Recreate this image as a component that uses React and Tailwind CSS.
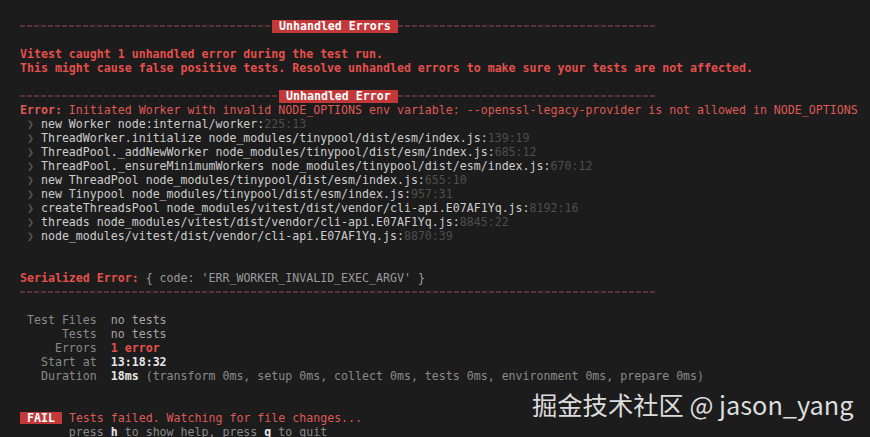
const dash =
  'inline-block h-[2px] align-middle bg-[repeating-linear-gradient(90deg,#5a3134_0_5px,transparent_5px_7px)]';

function Header({ label, left, right }) {
  return (
    <div className="flex items-center h-[14px]">
      <span className={`${dash} ${left}`} />
      <span className="inline-block bg-[#c4383a] text-white font-bold px-[7px] leading-[13px]">{label}</span>
      <span className={`${dash} ${right}`} />
    </div>
  );
}

const stack = [
  ['new Worker node:internal/worker:', '225:13'],
  ['ThreadWorker.initialize node_modules/tinypool/dist/esm/index.js:', '139:19'],
  ['ThreadPool._addNewWorker node_modules/tinypool/dist/esm/index.js:', '685:12'],
  ['ThreadPool._ensureMinimumWorkers node_modules/tinypool/dist/esm/index.js:', '670:12'],
  ['new ThreadPool node_modules/tinypool/dist/esm/index.js:', '655:10'],
  ['new Tinypool node_modules/tinypool/dist/esm/index.js:', '957:31'],
  ['createThreadsPool node_modules/vitest/dist/vendor/cli-api.E07AF1Yq.js:', '8192:16'],
  ['threads node_modules/vitest/dist/vendor/cli-api.E07AF1Yq.js:', '8845:22'],
  ['node_modules/vitest/dist/vendor/cli-api.E07AF1Yq.js:', '8870:39'],
];

const Blank = () => <div className="h-[14px]" />;

export default function App() {
  return (
    <div className="relative w-[870px] h-[437px] overflow-hidden bg-[#1c1c1c] font-['DejaVu_Sans_Mono',monospace] text-[11.6px] leading-[14px] whitespace-pre">
      <div className="pl-[20px] pt-[19px]">
        <Header label="Unhandled Errors" left="w-[252px]" right="w-[257px]" />
        <Blank />
        <div className="text-[#e4504c] font-bold">Vitest caught 1 unhandled error during the test run.</div>
        <div className="text-[#e4504c] font-bold">
          This might cause false positive tests. Resolve unhandled errors to make sure your tests are not affected.
        </div>
        <Blank />
        <Header label="Unhandled Error" left="w-[259px]" right="w-[257px]" />
        <div className="text-[#de5a55]">
          <span className="font-bold">Error:</span> Initiated Worker with invalid NODE_OPTIONS env variable: --openssl-legacy-provider is not allowed in NODE_OPTIONS
        </div>
        {stack.map(([text, pos]) => (
          <div key={text} className="text-[#cdcdcd]">
            <span className="text-[#555]"> ❯ </span>
            {text}
            <span className="text-[#4e4e4e]">{pos}</span>
          </div>
        ))}
        <Blank />
        <Blank />
        <div className="text-[#9a9a9a]">
          <span className="text-[#e4504c] font-bold">Serialized Error:</span> {"{ code: 'ERR_WORKER_INVALID_EXEC_ARGV' }"}
        </div>
        <div className="flex items-center h-[14px]">
          <span className={`${dash} w-[635px]`} />
        </div>
        <Blank />
        <div>
          <span className="text-[#8a8a8a]"> Test Files  </span>
          <span className="text-[#a5a5a5]">no tests</span>
        </div>
        <div>
          <span className="text-[#8a8a8a]">      Tests  </span>
          <span className="text-[#a5a5a5]">no tests</span>
        </div>
        <div>
          <span className="text-[#8a8a8a]">     Errors  </span>
          <span className="text-[#e4504c] font-bold">1 error</span>
        </div>
        <div>
          <span className="text-[#8a8a8a]">   Start at  </span>
          <span className="text-[#e6e6e6] font-bold">13:18:32</span>
        </div>
        <div>
          <span className="text-[#8a8a8a]">   Duration  </span>
          <span className="text-[#e6e6e6] font-bold">18ms</span>
          <span className="text-[#8a8a8a]">
            {' (transform 0ms, setup 0ms, collect 0ms, tests 0ms, environment 0ms, prepare 0ms)'}
          </span>
        </div>
        <Blank />
        <Blank />
        <div className="flex items-center h-[14px]">
          <span className="inline-block bg-[#c4383a] text-white font-bold px-[7px] leading-[12px]">FAIL</span>
          <span className="text-[#de5a55]"> Tests failed. Watching for file changes...</span>
        </div>
        <div className="text-[#8a8a8a]">
          {'       press '}
          <span className="text-[#e6e6e6] font-bold">h</span>
          {' to show help, press '}
          <span className="text-[#e6e6e6] font-bold">q</span>
          {' to quit'}
        </div>
      </div>
      <div className="absolute left-[532px] top-[387px] text-[25.3px] leading-[34px] text-[#dcdcdc] font-['Noto_Sans_CJK_SC','Noto_Sans',sans-serif]">
        掘金技术社区 @ jason_yang
      </div>
    </div>
  );
}
